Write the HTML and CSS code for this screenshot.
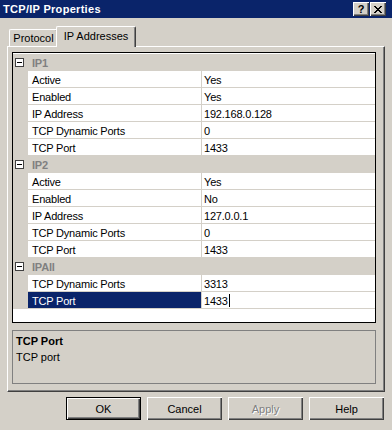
FILE: index.html
```html
<!DOCTYPE html>
<html lang="en">
<head>
    <meta charset="UTF-8">
    <title>TCP/IP Properties</title>
    <link rel="stylesheet" href="styles.css">
</head>
<body>
    <div class="window">
        <div class="titlebar">
            <span class="title">TCP/IP Properties</span>
            <div class="caption-buttons">
                <span class="cap-btn help">?</span>
                <span class="cap-btn close">
                    <svg width="8" height="7" viewBox="0 0 8 7">
                        <path d="M0 0h2v1h1v1h2v-1h1v-1h2v1h-1v1h-1v1h-1v1h1v1h1v1h1v1h-2v-1h-1v-1h-2v1h-1v1h-2v-1h1v-1h1v-1h1v-1h-1v-1h-1v-1h-1z" fill="#000"/>
                    </svg>
                </span>
            </div>
        </div>

        <div class="content">
            <div class="tabs">
                <div class="tab">Protocol</div>
                <div class="tab active">IP Addresses</div>
            </div>

            <div class="panel">
                <div class="grid">
                    <div class="group"><span class="toggle"></span><span class="group-name">IP1</span></div>
                    <div class="prop"><span class="name">Active</span><span class="value">Yes</span></div>
                    <div class="prop"><span class="name">Enabled</span><span class="value">Yes</span></div>
                    <div class="prop"><span class="name">IP Address</span><span class="value">192.168.0.128</span></div>
                    <div class="prop"><span class="name">TCP Dynamic Ports</span><span class="value">0</span></div>
                    <div class="prop"><span class="name">TCP Port</span><span class="value">1433</span></div>

                    <div class="group"><span class="toggle"></span><span class="group-name">IP2</span></div>
                    <div class="prop"><span class="name">Active</span><span class="value">Yes</span></div>
                    <div class="prop"><span class="name">Enabled</span><span class="value">No</span></div>
                    <div class="prop"><span class="name">IP Address</span><span class="value">127.0.0.1</span></div>
                    <div class="prop"><span class="name">TCP Dynamic Ports</span><span class="value">0</span></div>
                    <div class="prop"><span class="name">TCP Port</span><span class="value">1433</span></div>

                    <div class="group"><span class="toggle"></span><span class="group-name">IPAll</span></div>
                    <div class="prop"><span class="name">TCP Dynamic Ports</span><span class="value">3313</span></div>
                    <div class="prop selected"><span class="name">TCP Port</span><span class="value">1433<span class="caret"></span></span></div>
                </div>

                <div class="desc">
                    <div class="desc-title">TCP Port</div>
                    <div class="desc-text">TCP port</div>
                </div>
            </div>

            <div class="buttons">
                <button class="btn default">OK</button>
                <button class="btn">Cancel</button>
                <button class="btn" disabled>Apply</button>
                <button class="btn">Help</button>
            </div>
        </div>
    </div>
</body>
</html>
```

FILE: styles.css
```css
* {
    box-sizing: border-box;
}
body {
    margin: 0;
    background: #d4d0c8;
    font-family: 'Liberation Sans', Arial, sans-serif;
    font-size: 11px;
    color: #000;
}
.window {
    width: 392px;
    height: 430px;
    background: #d4d0c8;
}

/* Заголовок окна */
.titlebar {
    height: 18px;
    background: #0a246a;
    display: flex;
    align-items: center;
    justify-content: space-between;
    padding: 0 6px 0 3px;
}
.title {
    color: #fff;
    font-weight: bold;
    letter-spacing: 0.3px;
}
.caption-buttons {
    display: flex;
    gap: 1px;
}
.cap-btn {
    width: 16px;
    height: 14px;
    display: flex;
    align-items: center;
    justify-content: center;
    background: #d4d0c8;
    box-shadow: inset 1px 1px #fff, inset -1px -1px #404040, inset -2px -2px #808080;
    font-weight: bold;
    font-size: 11px;
    line-height: 1;
}

.content {
    padding: 8px 0 0 7px;
}

/* Вкладки */
.tabs {
    display: flex;
    align-items: flex-end;
    height: 21px;
    padding-left: 2px;
    margin-bottom: -1px;
    position: relative;
}
.tab {
    height: 18px;
    width: 49px;
    display: flex;
    align-items: center;
    justify-content: center;
    border-top: 1px solid #fff;
    border-left: 1px solid #fff;
    border-right: 1px solid #404040;
    border-radius: 2px 2px 0 0;
    box-shadow: inset -1px 0 #808080;
    padding-bottom: 1px;
}
.tab.active {
    height: 21px;
    width: 80px;
    margin-left: -2px;
    background: #d4d0c8;
    position: relative;
    z-index: 1;
    padding-bottom: 2px;
}

.panel {
    width: 378px;
    height: 346px;
    border-top: 1px solid #fff;
    border-left: 1px solid #fff;
    border-right: 1px solid #404040;
    border-bottom: 1px solid #404040;
    box-shadow: inset -1px -1px #808080;
    padding: 5px 0 0 4px;
}

/* Сетка свойств */
.grid {
    width: 364px;
    height: 271px;
    border: 1px solid #000;
    background: #fff;
    padding-top: 1px;
    letter-spacing: -0.2px;
}
.group {
    height: 17px;
    background: #d4d0c8;
    display: flex;
    align-items: center;
    padding-left: 2px;
}
.toggle {
    width: 9px;
    height: 9px;
    border: 1px solid #404040;
    background: #fff;
    position: relative;
    margin-right: 8px;
}
.toggle::after {
    content: '';
    position: absolute;
    left: 1px;
    top: 3px;
    width: 5px;
    height: 1px;
    background: #000;
}
.group-name {
    color: #808080;
    font-weight: bold;
}
.prop {
    height: 17px;
    display: flex;
    background: #d4d0c8;
    padding-left: 15px;
}
.prop .name,
.prop .value {
    background: #fff;
    border-bottom: 1px solid #d4d0c8;
    display: flex;
    align-items: center;
    white-space: nowrap;
    padding-top: 1px;
}
.prop .name {
    width: 174px;
    padding-left: 4px;
    border-right: 1px solid #d4d0c8;
}
.prop .value {
    flex: 1;
    padding-left: 2px;
}
.prop.selected .name {
    background: #0a246a;
    color: #fff;
}
.caret {
    display: inline-block;
    width: 1px;
    height: 13px;
    margin-left: 1px;
    background: #000;
}

/* Описание свойства */
.desc {
    width: 364px;
    height: 54px;
    margin-top: 7px;
    border: 1px solid #808080;
    padding: 2px 3px;
    line-height: 16px;
}
.desc-title {
    font-weight: bold;
}

/* Кнопки */
.buttons {
    display: flex;
    justify-content: flex-end;
    gap: 6px;
    padding-right: 8px;
    margin-top: 5px;
}
.btn {
    width: 75px;
    height: 23px;
    border: none;
    background: #d4d0c8;
    font-family: 'Liberation Sans', Arial, sans-serif;
    font-size: 11px;
    color: #000;
    padding: 0;
    box-shadow: inset 1px 1px #fff, inset -1px -1px #404040, inset -2px -2px #808080;
}
.btn.default {
    border: 1px solid #000;
}
.btn:disabled {
    color: #808080;
    text-shadow: 1px 1px #fff;
}
```
